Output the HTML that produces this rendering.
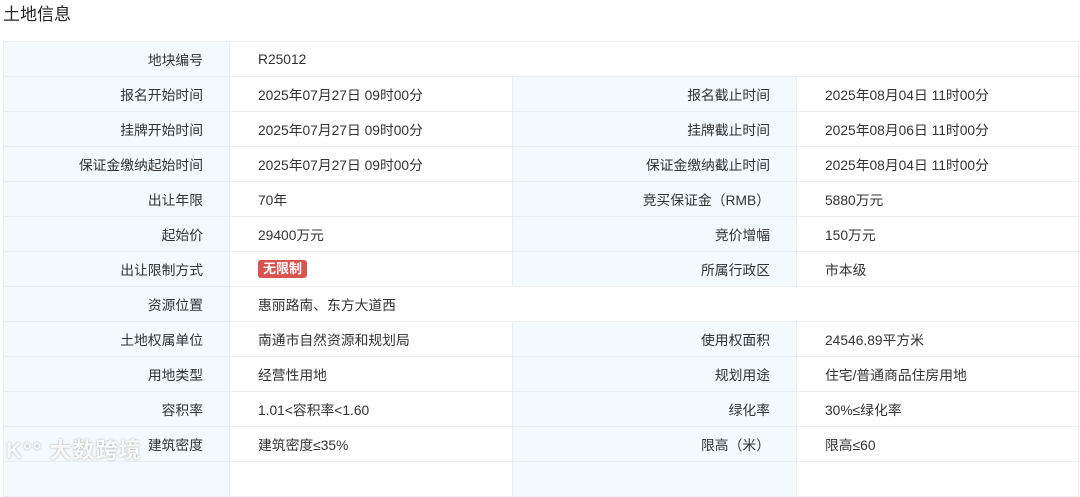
<!DOCTYPE html><html><head><meta charset="utf-8"><style>
body{margin:0;background:#fff;font-family:"Liberation Sans","Noto Sans CJK SC",sans-serif;width:1080px;height:471px;overflow:hidden;position:relative}
h2{position:absolute;left:3px;top:0px;margin:0;font-size:17px;font-weight:normal;color:#222}
table{position:absolute;left:3px;top:41px;border-collapse:collapse;table-layout:fixed;width:1075px;font-size:13.8px;color:#333}
td{height:34px;border:1px solid #e9eef2;padding:0;white-space:nowrap}
td.l{background:#f3f9fd;text-align:right;padding-right:26px}
td.v{padding-left:28px}
.b{display:inline-block;background:#d9534f;color:#fff;font-weight:bold;border-radius:3px;padding:0 5px;line-height:18px;font-size:13px}
.wm{position:absolute;left:6px;top:433px;color:rgba(255,255,255,.9);font-size:22px;font-weight:bold;text-shadow:0 0 2px #aaa;letter-spacing:1px}
</style></head><body>
<h2>土地信息</h2>
<table>
<colgroup><col style="width:226px"><col style="width:283px"><col style="width:284px"><col style="width:282px"></colgroup>
<tr><td class="l">地块编号</td><td class="v" colspan="3">R25012</td></tr>
<tr><td class="l">报名开始时间</td><td class="v">2025年07月27日 09时00分</td><td class="l">报名截止时间</td><td class="v">2025年08月04日 11时00分</td></tr>
<tr><td class="l">挂牌开始时间</td><td class="v">2025年07月27日 09时00分</td><td class="l">挂牌截止时间</td><td class="v">2025年08月06日 11时00分</td></tr>
<tr><td class="l">保证金缴纳起始时间</td><td class="v">2025年07月27日 09时00分</td><td class="l">保证金缴纳截止时间</td><td class="v">2025年08月04日 11时00分</td></tr>
<tr><td class="l">出让年限</td><td class="v">70年</td><td class="l">竞买保证金（RMB）</td><td class="v">5880万元</td></tr>
<tr><td class="l">起始价</td><td class="v">29400万元</td><td class="l">竞价增幅</td><td class="v">150万元</td></tr>
<tr><td class="l">出让限制方式</td><td class="v"><span class="b">无限制</span></td><td class="l">所属行政区</td><td class="v">市本级</td></tr>
<tr><td class="l">资源位置</td><td class="v" colspan="3">惠丽路南、东方大道西</td></tr>
<tr><td class="l">土地权属单位</td><td class="v">南通市自然资源和规划局</td><td class="l">使用权面积</td><td class="v">24546.89平方米</td></tr>
<tr><td class="l">用地类型</td><td class="v">经营性用地</td><td class="l">规划用途</td><td class="v">住宅/普通商品住房用地</td></tr>
<tr><td class="l">容积率</td><td class="v">1.01&lt;容积率&lt;1.60</td><td class="l">绿化率</td><td class="v">30%≤绿化率</td></tr>
<tr><td class="l">建筑密度</td><td class="v">建筑密度≤35%</td><td class="l">限高（米）</td><td class="v">限高≤60</td></tr>
<tr><td class="l"></td><td class="v"></td><td class="l"></td><td class="v"></td></tr>
</table>
<div class="wm">K°° 大数跨境</div>
</body></html>
